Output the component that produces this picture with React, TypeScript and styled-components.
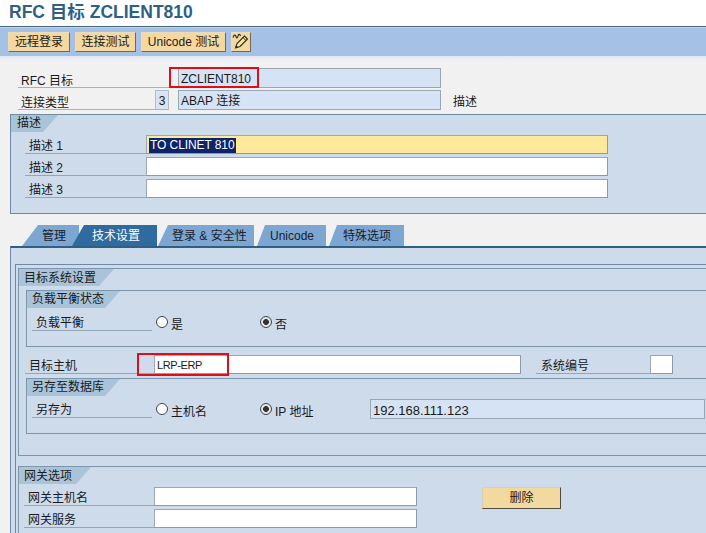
import React from "react";
import styled, { createGlobalStyle } from "styled-components";

const Global = createGlobalStyle`
  html, body { margin: 0; padding: 0; background: #f1f1f1; }
  * { box-sizing: border-box; }
`;

const Page = styled.div`
  width: 706px;
  height: 533px;
  overflow: hidden;
  background: #f1f1f1;
  font-family: "Liberation Sans", "Noto Sans CJK SC", sans-serif;
  font-size: 12px;
  color: #1a1a1a;
  display: flex;
  flex-direction: column;
`;

const TitleBar = styled.div`
  height: 27px;
  flex: none;
  background: #fff;
  border-bottom: 1px solid #47687a;
  padding-left: 9px;
  font-size: 17.5px;
  line-height: 25px;
  font-weight: bold;
  color: #2f5f85;
`;

const Toolbar = styled.div`
  height: 29px;
  flex: none;
  display: flex;
  align-items: center;
  gap: 5px;
  padding-left: 8px;
  background: #a5c1e5;
  border-top: 1px solid #c3d6ec;
`;

const Strip = styled.div`
  height: 6px;
  flex: none;
  background: linear-gradient(#dfe8f2, #e8eef4 40%, #f1f1f1);
`;

const ToolButton = styled.div<{ $w: number }>`
  width: ${(p) => p.$w}px;
  height: 20px;
  background: #f6d79e;
  border: 1px solid;
  border-color: #e9ddc0 #6f6a58 #6f6a58 #e9ddc0;
  display: flex;
  align-items: center;
  justify-content: center;
  line-height: 18px;
  white-space: nowrap;
`;

const Header = styled.div`
  flex: none;
  height: 52px;
  padding: 6px 0 0 18px;
  display: flex;
  flex-direction: column;
  gap: 2px;
`;

const HeaderRow = styled.div`
  height: 20px;
  display: flex;
`;

const HeaderLabel = styled.div`
  width: 137px;
  height: 20px;
  padding: 4px 0 0 3px;
  line-height: 18px;
  border-bottom: 1px solid #aab2b8;
`;

const KeyBox = styled.div<{ $empty?: boolean }>`
  width: 14px;
  height: 20px;
  text-align: center;
  line-height: 20px;
  background: ${(p) => (p.$empty ? "transparent" : "#d8e4f3")};
  border: ${(p) => (p.$empty ? "none" : "1px solid #b0bcc8")};
  border-bottom: 1px solid #aab2b8;
`;

const ReadField = styled.div<{ $w: number; $ml?: number }>`
  position: relative;
  width: ${(p) => p.$w}px;
  height: 20px;
  margin-left: ${(p) => p.$ml ?? 0}px;
  padding-left: 2px;
  flex: none;
  line-height: 21px;
  background: #d6e3f4;
  border: 1px solid #9aa6b2;
`;

const IpText = styled.span`
  font-size: 13px;
`;

const SideText = styled.div`
  margin-left: 12px;
  padding-top: 3px;
  line-height: 19px;
`;

const Panel = styled.div`
  flex: none;
  height: 100px;
  margin-left: 10px;
  background: #cddbea;
  border: 1px solid #6f8aa2;
  border-right: none;
`;

const GroupTitle = styled.div<{ $w: number }>`
  width: ${(p) => p.$w}px;
  height: 17px;
  padding-left: 5px;
  line-height: 18px;
  background: #a9c4d8;
  clip-path: polygon(0 0, 100% 0, calc(100% - 15px) 100%, 0 100%);
`;

const PanelTitle = styled(GroupTitle)`
  padding-left: 6px;
  line-height: 17px;
`;

const SubTitle = styled(GroupTitle)`
  line-height: 17px;
`;

const FieldStack = styled.div`
  display: flex;
  flex-direction: column;
  gap: 3px;
  padding: 3px 0 0 14px;
`;

const FieldRow = styled.div`
  height: 19px;
  display: flex;
`;

const FieldLabel = styled.div<{ $w: number }>`
  width: ${(p) => p.$w}px;
  height: 19px;
  flex: none;
  padding-left: 4px;
  line-height: 22px;
  border-bottom: 1px solid #93a6b8;
`;

const Input = styled.div<{ $w: number; $active?: boolean; $ml?: number }>`
  position: relative;
  width: ${(p) => p.$w}px;
  height: 19px;
  margin-left: ${(p) => p.$ml ?? 0}px;
  padding-left: 2px;
  flex: none;
  line-height: 18px;
  background: ${(p) => (p.$active ? "#ffea9c" : "#fff")};
  border: 1px solid;
  border-color: #9aa8b5 #8d9aa6 #8d9aa6 #9aa8b5;
`;

const Selected = styled.span`
  background: #0e2468;
  color: #fff;
  display: inline-block;
  line-height: 15px;
  padding: 0 1px;
  letter-spacing: -0.08px;
`;

const HostText = styled.span`
  font-size: 11px;
  letter-spacing: -0.4px;
`;

const RedMark = styled.div<{ $l: number; $t: number; $w: number; $h: number }>`
  position: absolute;
  left: ${(p) => p.$l}px;
  top: ${(p) => p.$t}px;
  width: ${(p) => p.$w}px;
  height: ${(p) => p.$h}px;
  border: 2px solid #dc0f1a;
`;

const TabBar = styled.div`
  flex: none;
  height: 21px;
  margin-top: 11px;
  padding-left: 22px;
  display: flex;
  align-items: flex-end;
`;

const Tab = styled.div<{ $w: number; $ml: number; $active?: boolean; $pad: number; $slant: number }>`
  width: ${(p) => p.$w}px;
  height: 21px;
  margin-left: ${(p) => p.$ml}px;
  padding-left: ${(p) => p.$pad}px;
  flex: none;
  line-height: 23px;
  white-space: nowrap;
  position: relative;
  z-index: ${(p) => (p.$active ? 1 : 0)};
  color: ${(p) => (p.$active ? "#fff" : "#16222e")};
  background: ${(p) => (p.$active ? "#2f6b9e" : "#7ea6d2")};
  clip-path: polygon(${(p) => p.$slant}px 0, 100% 0, 100% 100%, 0 100%);
`;

const TabBody = styled.div`
  flex: 1;
  margin-left: 10px;
  padding: 16px 0 0 4px;
  background: #cddbea;
  border-top: 2px solid #2f6082;
  border-left: 1px solid #6f8aa2;
`;

const Frame = styled.div`
  height: 100%;
  padding: 3px 0 0 2px;
  border-top: 1px solid #6f8aa2;
  border-left: 1px solid #6f8aa2;
`;

const Group = styled.div<{ $h: number; $mt?: number }>`
  height: ${(p) => p.$h}px;
  margin-top: ${(p) => p.$mt ?? 0}px;
  border: 1px solid #7c96ac;
  border-right: none;
`;

const OpenGroup = styled(Group)`
  border-bottom: none;
`;

const SubGroup = styled.div<{ $h: number; $mt: number }>`
  height: ${(p) => p.$h}px;
  margin: ${(p) => p.$mt}px 0 0 7px;
  border: 1px solid #7c96ac;
  border-right: none;
`;

const RadioRow = styled.div<{ $mt: number }>`
  height: 19px;
  margin: ${(p) => p.$mt}px 0 0 5px;
  display: flex;
  align-items: center;
`;

const RadioItem = styled.div<{ $w: number }>`
  width: ${(p) => p.$w}px;
  height: 19px;
  flex: none;
  display: flex;
  align-items: center;
  gap: 3px;
  margin-left: 4px;
`;

const RadioText = styled.span`
  margin-top: 3px;
`;

const Radio = styled.span<{ $on?: boolean }>`
  width: 12px;
  height: 12px;
  flex: none;
  border-radius: 50%;
  border: 1px solid #3c4650;
  background: ${(p) => (p.$on ? "radial-gradient(circle, #333 0 2.6px, #e6e6e6 3.2px)" : "#fff")};
`;

const HostRow = styled.div`
  height: 19px;
  margin: 8px 0 0 6px;
  display: flex;
`;

const NumLabel = styled(FieldLabel)`
  margin-left: 15px;
  padding-left: 5px;
`;

const PushButton = styled.div`
  width: 79px;
  height: 22px;
  margin-left: 65px;
  flex: none;
  position: relative;
  z-index: 1;
  background: #f2d99f;
  border: 1px solid;
  border-color: #d8d0b8 #4b4b40 #4b4b40 #d8d0b8;
  text-align: center;
  line-height: 20px;
`;

const GatewayStack = styled(FieldStack)`
  padding: 3px 0 0 5px;
`;

function PencilIcon() {
  return (
    <svg width="18" height="18" viewBox="0 0 18 18" fill="none">
      <path d="M1 4.500c1-3 2.500-3 3-1s1.500 2 2-.5 2-2 2.500 0" stroke="#333" strokeWidth="1.200" />
      <path d="M3.500 15l1.500-4.500L12.500 3l3 3-7.500 7.500z" fill="#f8e98c" stroke="#2a2a2a" strokeWidth="1.100" />
      <path d="M11 4.500l3 3" stroke="#2a2a2a" strokeWidth="1" />
      <path d="M3.500 15l.8-2.700 1.900 1.900z" fill="#2a2a2a" />
    </svg>
  );
}

export default function App() {
  return (
    <Page>
      <Global />
      <TitleBar>RFC 目标 ZCLIENT810</TitleBar>
      <Toolbar>
        <ToolButton $w={62}>远程登录</ToolButton>
        <ToolButton $w={61}>连接测试</ToolButton>
        <ToolButton $w={85}>Unicode 测试</ToolButton>
        <ToolButton $w={20}>
          <PencilIcon />
        </ToolButton>
      </Toolbar>
      <Strip />

      <Header>
        <HeaderRow>
          <HeaderLabel>RFC 目标</HeaderLabel>
          <KeyBox $empty />
          <ReadField $w={263} $ml={9}>
            ZCLIENT810
            <RedMark $l={-10} $t={-2} $w={90} $h={21} />
          </ReadField>
        </HeaderRow>
        <HeaderRow>
          <HeaderLabel>连接类型</HeaderLabel>
          <KeyBox>3</KeyBox>
          <ReadField $w={263} $ml={9}>ABAP 连接</ReadField>
          <SideText>描述</SideText>
        </HeaderRow>
      </Header>

      <Panel>
        <PanelTitle $w={47}>描述</PanelTitle>
        <FieldStack>
          <FieldRow>
            <FieldLabel $w={121}>描述 1</FieldLabel>
            <Input $w={462} $active>
              <Selected>TO CLINET 810</Selected>
            </Input>
          </FieldRow>
          <FieldRow>
            <FieldLabel $w={121}>描述 2</FieldLabel>
            <Input $w={462} />
          </FieldRow>
          <FieldRow>
            <FieldLabel $w={121}>描述 3</FieldLabel>
            <Input $w={462} />
          </FieldRow>
        </FieldStack>
      </Panel>

      <TabBar>
        <Tab $w={57} $ml={0} $pad={20} $slant={16}>管理</Tab>
        <Tab $w={85} $ml={-7} $pad={20} $slant={12} $active>技术设置</Tab>
        <Tab $w={96} $ml={1} $pad={14} $slant={10}>登录 &amp; 安全性</Tab>
        <Tab $w={69} $ml={3} $pad={13} $slant={8}>Unicode</Tab>
        <Tab $w={75} $ml={3} $pad={14} $slant={8}>特殊选项</Tab>
      </TabBar>

      <TabBody>
        <Frame>
          <Group $h={188}>
            <GroupTitle $w={95}>目标系统设置</GroupTitle>
            <SubGroup $h={57} $mt={4}>
              <SubTitle $w={93}>负载平衡状态</SubTitle>
              <RadioRow $mt={4}>
                <FieldLabel $w={120}>负载平衡</FieldLabel>
                <RadioItem $w={100}>
                  <Radio /><RadioText>是</RadioText>
                </RadioItem>
                <RadioItem $w={60}>
                  <Radio $on /><RadioText>否</RadioText>
                </RadioItem>
              </RadioRow>
            </SubGroup>
            <HostRow>
              <FieldLabel $w={129}>目标主机</FieldLabel>
              <Input $w={367}>
                <HostText>LRP-ERP</HostText>
                <RedMark $l={-18} $t={-3} $w={92} $h={23} />
              </Input>
              <NumLabel $w={114}>系统编号</NumLabel>
              <Input $w={23} />
            </HostRow>
            <SubGroup $h={56} $mt={4}>
              <SubTitle $w={93}>另存至数据库</SubTitle>
              <RadioRow $mt={3}>
                <FieldLabel $w={120}>另存为</FieldLabel>
                <RadioItem $w={100}>
                  <Radio /><RadioText>主机名</RadioText>
                </RadioItem>
                <RadioItem $w={110}>
                  <Radio $on /><RadioText>IP 地址</RadioText>
                </RadioItem>
                <ReadField $w={335}><IpText>192.168.111.123</IpText></ReadField>
              </RadioRow>
            </SubGroup>
          </Group>
          <OpenGroup $h={70} $mt={10}>
            <GroupTitle $w={72}>网关选项</GroupTitle>
            <GatewayStack>
              <FieldRow>
                <FieldLabel $w={130}>网关主机名</FieldLabel>
                <Input $w={263} />
                <PushButton>删除</PushButton>
              </FieldRow>
              <FieldRow>
                <FieldLabel $w={130}>网关服务</FieldLabel>
                <Input $w={263} />
              </FieldRow>
            </GatewayStack>
          </OpenGroup>
        </Frame>
      </TabBody>
    </Page>
  );
}
